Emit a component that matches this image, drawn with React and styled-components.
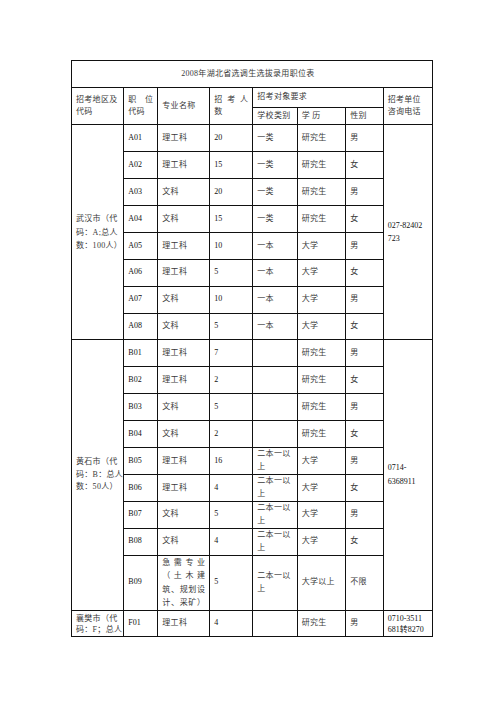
import React from 'react';
import styled, { createGlobalStyle } from 'styled-components';

const Global = createGlobalStyle`
  html, body { margin: 0; padding: 0; background: #fff; }
  body { font-family: "Liberation Serif", "Noto Sans CJK SC", serif; }
`;

const Page = styled.div`
  width: 496px;
  height: 702px;
  box-sizing: border-box;
  padding: 60px 0 0 71px;
  background: #fff;
  overflow: hidden;
`;

const Table = styled.table`
  border-collapse: collapse;
  table-layout: fixed;
  width: 361px;
  font-size: 8px;
  line-height: 12.5px;
  color: #3a3a3a;
  letter-spacing: 0.3px;
`;

const Col = styled.col`
  width: ${(p) => p.$w}px;
`;

const Row = styled.tr`
  height: ${(p) => p.$h}px;
`;

const Cell = styled.td`
  border: 1px solid #111;
  padding: ${(p) => (p.$top ? '2px 4px 0' : '0 4px')};
  vertical-align: ${(p) => (p.$top ? 'top' : 'middle')};
  text-align: left;
  line-height: ${(p) => p.$lh || 12.5}px;
  overflow: hidden;
  white-space: nowrap;
`;

const TitleCell = styled(Cell)`
  text-align: center;
  padding-right: 12px;
`;

const Line = styled.div`
  display: block;
`;

const Spread = styled.div`
  display: flex;
  justify-content: space-between;
`;

const Code = styled.span`
  color: #111;
  letter-spacing: 0;
`;

const spread = (s) => (
  <Spread>
    {Array.from(s).map((c, i) => (
      <span key={i}>{c}</span>
    ))}
  </Spread>
);

const aRows = [
  ['A01', '理工科', '20', '一类', '研究生', '男'],
  ['A02', '理工科', '15', '一类', '研究生', '女'],
  ['A03', '文科', '20', '一类', '研究生', '男'],
  ['A04', '文科', '15', '一类', '研究生', '女'],
  ['A05', '理工科', '10', '一本', '大学', '男'],
  ['A06', '理工科', '5', '一本', '大学', '女'],
  ['A07', '文科', '10', '一本', '大学', '男'],
  ['A08', '文科', '5', '一本', '大学', '女'],
];

const bRows = [
  ['B01', '理工科', '7', '', '研究生', '男'],
  ['B02', '理工科', '2', '', '研究生', '女'],
  ['B03', '文科', '5', '', '研究生', '男'],
  ['B04', '文科', '2', '', '研究生', '女'],
  ['B05', '理工科', '16', '二本', '大学', '男'],
  ['B06', '理工科', '4', '二本', '大学', '女'],
  ['B07', '文科', '5', '二本', '大学', '男'],
  ['B08', '文科', '4', '二本', '大学', '女'],
];

const School = ({ v }) =>
  v === '二本' ? (
    <>
      <Line>二本一以</Line>
      <Line>上</Line>
    </>
  ) : (
    v
  );

const RH = 26.9;

export default function App() {
  return (
    <Page>
      <Global />
      <Table>
        <colgroup>
          <Col $w={52.3} />
          <Col $w={34} />
          <Col $w={52} />
          <Col $w={43} />
          <Col $w={44.4} />
          <Col $w={48.6} />
          <Col $w={37.4} />
          <Col $w={49} />
        </colgroup>
        <tbody>
          <Row $h={27}>
            <TitleCell colSpan={8}>2008年湖北省选调生选拔录用职位表</TitleCell>
          </Row>
          <Row $h={19.7}>
            <Cell rowSpan={2}>
              <Line>招考地区及</Line>
              <Line>代码</Line>
            </Cell>
            <Cell rowSpan={2}>
              {spread('职位')}
              <Line>代码</Line>
            </Cell>
            <Cell rowSpan={2}>专业名称</Cell>
            <Cell rowSpan={2}>
              {spread('招考人')}
              <Line>数</Line>
            </Cell>
            <Cell colSpan={3}>招考对象要求</Cell>
            <Cell rowSpan={2}>
              <Line>招考单位</Line>
              <Line>咨询电话</Line>
            </Cell>
          </Row>
          <Row $h={17.6}>
            <Cell>学校类别</Cell>
            <Cell>学 历</Cell>
            <Cell>性别</Cell>
          </Row>
          {aRows.map((r, i) => (
            <Row $h={RH} key={r[0]}>
              {i === 0 && (
                <Cell rowSpan={8} $lh={13.5}>
                  <Line>武汉市（代</Line>
                  <Line>码：A;总人</Line>
                  <Line>数：100人）</Line>
                </Cell>
              )}
              <Cell><Code>{r[0]}</Code></Cell>
              <Cell>{r[1]}</Cell>
              <Cell><Code>{r[2]}</Code></Cell>
              <Cell>{r[3]}</Cell>
              <Cell>{r[4]}</Cell>
              <Cell>{r[5]}</Cell>
              {i === 0 && (
                <Cell rowSpan={8} $lh={13.5}>
                  <Line><Code>027-82402</Code></Line>
                  <Line><Code>723</Code></Line>
                </Cell>
              )}
            </Row>
          ))}
          {bRows.map((r, i) => (
            <Row $h={RH} key={r[0]}>
              {i === 0 && (
                <Cell rowSpan={9}>
                  <Line>黄石市（代</Line>
                  <Line>码：B：总人</Line>
                  <Line>数：50人）</Line>
                </Cell>
              )}
              <Cell><Code>{r[0]}</Code></Cell>
              <Cell>{r[1]}</Cell>
              <Cell><Code>{r[2]}</Code></Cell>
              <Cell><School v={r[3]} /></Cell>
              <Cell>{r[4]}</Cell>
              <Cell>{r[5]}</Cell>
              {i === 0 && (
                <Cell rowSpan={9} $lh={14}>
                  <Line><Code>0714-</Code></Line>
                  <Line><Code>6368911</Code></Line>
                </Cell>
              )}
            </Row>
          ))}
          <Row $h={54.3}>
            <Cell><Code>B09</Code></Cell>
            <Cell $lh={13.5}>
              {spread('急需专业')}
              {spread('（土木建')}
              {spread('筑、规划设')}
              {spread('计、采矿）')}
            </Cell>
            <Cell><Code>5</Code></Cell>
            <Cell><School v="二本" /></Cell>
            <Cell>大学以上</Cell>
            <Cell>不限</Cell>
          </Row>
          <Row $h={RH}>
            <Cell $top $lh={11.5}>
              <Line>襄樊市（代</Line>
              <Line>码：F；总人</Line>
            </Cell>
            <Cell><Code>F01</Code></Cell>
            <Cell>理工科</Cell>
            <Cell><Code>4</Code></Cell>
            <Cell></Cell>
            <Cell>研究生</Cell>
            <Cell>男</Cell>
            <Cell $top $lh={11.5}>
              <Line><Code>0710-3511</Code></Line>
              <Line><Code>681转8270</Code></Line>
            </Cell>
          </Row>
        </tbody>
      </Table>
    </Page>
  );
}
